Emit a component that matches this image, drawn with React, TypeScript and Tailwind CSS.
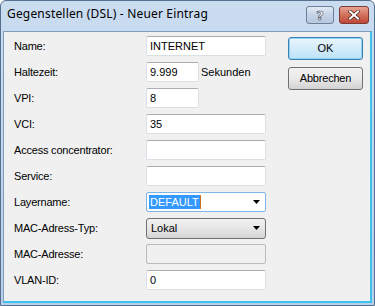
import React from "react";

const labelCls = "w-[132px] shrink-0 text-[11px] leading-none text-black tracking-[-0.2px]";
const inputBase =
  "h-[20px] rounded-[2px] border border-[#dbdfe6] border-t-[#abadb3] bg-white flex items-center pl-[3px] text-[11px] text-black";

function Arrow() {
  return (
    <svg width="8" height="5" viewBox="0 0 8 5" className="block">
      <path d="M0 0 H7 L3.5 4 Z" fill="#000" />
    </svg>
  );
}

function Row({ label, children }: { label: string; children: React.ReactNode }) {
  return (
    <div className="flex items-center h-[20px]">
      <div className={labelCls}>{label}</div>
      {children}
    </div>
  );
}

export default function App() {
  return (
    <div
      className="w-[375px] h-[306px] overflow-hidden flex flex-col rounded-t-[6px] border border-[#55708f] bg-gradient-to-b from-[#cadcf0] to-[#b9d0ea]"
      style={{ fontFamily: '"Liberation Sans", Arial, sans-serif' }}
    >
      {/* title bar */}
      <div className="h-[30px] shrink-0 flex items-start pl-[6px] pr-[5px]">
        <div
          className="mt-[5px] text-[12px] leading-[16px] text-black tracking-[0.18px]"
          style={{ fontFamily: '"Noto Sans", "Open Sans", sans-serif' }}
        >
          Gegenstellen (DSL) - Neuer Eintrag
        </div>
        <div className="ml-auto mt-[5px] flex gap-[5px]">
          <div className="w-[28px] h-[18px] rounded-[3px] border border-[#6d7f98] bg-gradient-to-b from-[#e3ebf5] via-[#c4d2e4] to-[#b7c8df] flex items-center justify-center">
            <span
              className="text-[13px] font-bold leading-none text-white"
              style={{ WebkitTextStroke: "0.6px #3c4a5e", fontFamily: '"DejaVu Sans", sans-serif' }}
            >
              ?
            </span>
          </div>
          <div className="w-[30px] h-[18px] rounded-[3px] border border-[#7d3a32] bg-gradient-to-b from-[#e8a493] via-[#d0705a] to-[#c0463a] flex items-center justify-center">
            <svg width="12" height="10" viewBox="0 0 12 10">
              <path d="M2 1.5 L10 8.5 M10 1.5 L2 8.5" stroke="#4a1c16" strokeWidth="3.4" strokeLinecap="square" />
              <path d="M2 1.5 L10 8.5 M10 1.5 L2 8.5" stroke="#fff" strokeWidth="2" strokeLinecap="square" />
            </svg>
          </div>
        </div>
      </div>

      {/* client frame */}
      <div className="flex-1 flex px-[2px] pb-[2px]">
        <div className="flex-1 flex bg-[#f0f0f0] border-l border-t border-[#7f9db9] border-r-2 border-b-2 border-r-[#3ec1ea] border-b-[#3ec1ea]">
          <div className="flex flex-col gap-[6px] pl-[10px] pt-[4px]">
            <Row label="Name:">
              <div className={`${inputBase} w-[120px]`}>INTERNET</div>
            </Row>
            <Row label="Haltezeit:">
              <div className={`${inputBase} w-[53px]`}>9.999</div>
              <div className="ml-[2px] text-[11px] text-black">Sekunden</div>
            </Row>
            <Row label="VPI:">
              <div className={`${inputBase} w-[53px]`}>8</div>
            </Row>
            <Row label="VCI:">
              <div className={`${inputBase} w-[120px]`}>35</div>
            </Row>
            <Row label="Access concentrator:">
              <div className={`${inputBase} w-[120px]`}></div>
            </Row>
            <Row label="Service:">
              <div className={`${inputBase} w-[120px]`}></div>
            </Row>
            <Row label="Layername:">
              <div className="h-[20px] w-[120px] rounded-[2px] border border-[#7eb4ea] bg-white flex items-center pl-[2px] pr-[4px]">
                <span className="bg-[#3399ff] text-white text-[11px] leading-[14px] px-[1px]">DEFAULT</span>
                <span className="w-[1px] h-[14px] bg-[#d0701a]" />
                <span className="ml-auto">
                  <Arrow />
                </span>
              </div>
            </Row>
            <Row label="MAC-Adress-Typ:">
              <div className="h-[21px] w-[120px] rounded-[3px] border border-[#707070] bg-gradient-to-b from-[#f2f2f2] via-[#e6e6e6] to-[#d4d4d4] flex items-center pl-[4px] pr-[4px] text-[11px] text-black">
                Lokal
                <span className="ml-auto">
                  <Arrow />
                </span>
              </div>
            </Row>
            <Row label="MAC-Adresse:">
              <div className="h-[20px] w-[120px] rounded-[2px] border border-[#b8bcc0] bg-[#f0f0f0]" />
            </Row>
            <Row label="VLAN-ID:">
              <div className={`${inputBase} w-[120px]`}>0</div>
            </Row>
          </div>

          <div className="flex flex-col gap-[7px] ml-[22px] pt-[5px]">
            <div className="w-[75px] h-[23px] rounded-[3px] border border-[#3c7fb1] bg-gradient-to-b from-[#eaf6fd] via-[#d3ecfa] to-[#bde3f7] flex items-center justify-center text-[11px] text-black shadow-[inset_0_0_0_1px_#8fd3f5]">
              OK
            </div>
            <div className="w-[75px] h-[23px] rounded-[3px] border border-[#707070] bg-gradient-to-b from-[#f2f2f2] via-[#e9e9e9] to-[#d2d2d2] flex items-center justify-center text-[11px] text-black tracking-[-0.2px]">
              Abbrechen
            </div>
          </div>
        </div>
      </div>
    </div>
  );
}
